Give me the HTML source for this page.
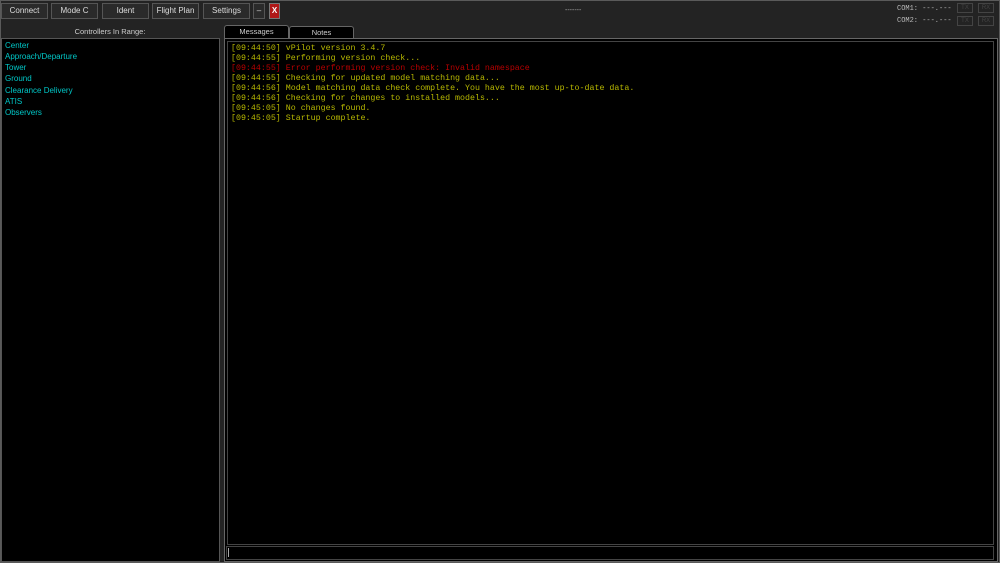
<!DOCTYPE html>
<html><head><meta charset="utf-8"><style>
*{margin:0;padding:0;box-sizing:border-box}
body{width:1000px;height:563px;background:#232323;position:relative;overflow:hidden;font-family:"Liberation Sans",sans-serif;font-size:8px;color:#ddd}
.frame{position:absolute;left:0;top:0;width:1000px;height:563px;border:1px solid #5a5a5a}
.btn{position:absolute;top:3px;height:16px;background:#2a2a2a;border:1px solid #555;color:#ddd;font-size:8px;text-align:center;line-height:14px}
.box{position:absolute;background:#000;border:1px solid #555}
.l{position:absolute;left:5px;color:#00c8c8;font-size:8px}
.m{position:absolute;left:231px;font-family:"Liberation Mono",monospace;font-size:8.3px;color:#b8b800;white-space:pre;letter-spacing:0}
.r{color:#b80000}
.tab{position:absolute;top:25px;height:13px;background:#000;border:1px solid #666;border-bottom:none;border-radius:3px 3px 0 0;color:#ccc;font-size:7.5px;text-align:center;line-height:12px}
.com{position:absolute;font-family:"Liberation Mono",monospace;font-size:7px;color:#bbb}
.sb{position:absolute;width:16px;height:10px;border:1px solid #444;color:#444;font-size:6px;text-align:center;line-height:8px}
</style></head><body>
<div class="frame"></div>
<div class="btn" style="left:1px;width:47px">Connect</div>
<div class="btn" style="left:51px;width:47px">Mode C</div>
<div class="btn" style="left:102px;width:47px">Ident</div>
<div class="btn" style="left:152px;width:47px">Flight Plan</div>
<div class="btn" style="left:203px;width:47px">Settings</div>
<div class="btn" style="left:253px;width:12px">–</div>
<div class="btn" style="left:269px;width:11px;background:#b01818;border-color:#777;color:#fff;font-weight:bold">X</div>
<div style="position:absolute;left:565px;top:7px;font-size:7px;color:#aaa">-------</div>
<div class="com" style="left:897px;top:5px">COM1: ---.---</div>
<div class="com" style="left:897px;top:17px">COM2: ---.---</div>
<div class="sb" style="left:957px;top:3px">TX</div><div class="sb" style="left:978px;top:3px">RX</div>
<div class="sb" style="left:957px;top:16px">TX</div><div class="sb" style="left:978px;top:16px">RX</div>
<div style="position:absolute;left:0;width:220px;top:27px;text-align:center;font-size:7.5px;color:#ccc">Controllers In Range:</div>
<div class="box" style="left:1px;top:38px;width:219px;height:524px"></div>
<div class="l" style="top:41px">Center</div>
<div class="l" style="top:52px">Approach/Departure</div>
<div class="l" style="top:63px">Tower</div>
<div class="l" style="top:74px">Ground</div>
<div class="l" style="top:86px">Clearance Delivery</div>
<div class="l" style="top:97px">ATIS</div>
<div class="l" style="top:108px">Observers</div>
<div class="tab" style="left:224px;width:65px">Messages</div>
<div class="tab" style="left:289px;width:65px;top:26px">Notes</div>
<div class="box" style="left:224px;top:38px;width:774px;height:524px;border-color:#666"></div>
<div class="box" style="left:227px;top:41px;width:767px;height:504px;border-color:#444"></div>
<div class="box" style="left:226px;top:546px;width:768px;height:14px;border-color:#444"></div>
<div style="position:absolute;left:228px;top:548px;width:1px;height:9px;background:#aaa"></div>
<div class="m" style="top:44px">[09:44:50] vPilot version 3.4.7</div>
<div class="m" style="top:54px">[09:44:55] Performing version check...</div>
<div class="m r" style="top:64px">[09:44:55] Error performing version check: Invalid namespace</div>
<div class="m" style="top:74px">[09:44:55] Checking for updated model matching data...</div>
<div class="m" style="top:84px">[09:44:56] Model matching data check complete. You have the most up-to-date data.</div>
<div class="m" style="top:94px">[09:44:56] Checking for changes to installed models...</div>
<div class="m" style="top:104px">[09:45:05] No changes found.</div>
<div class="m" style="top:114px">[09:45:05] Startup complete.</div>
</body></html>
